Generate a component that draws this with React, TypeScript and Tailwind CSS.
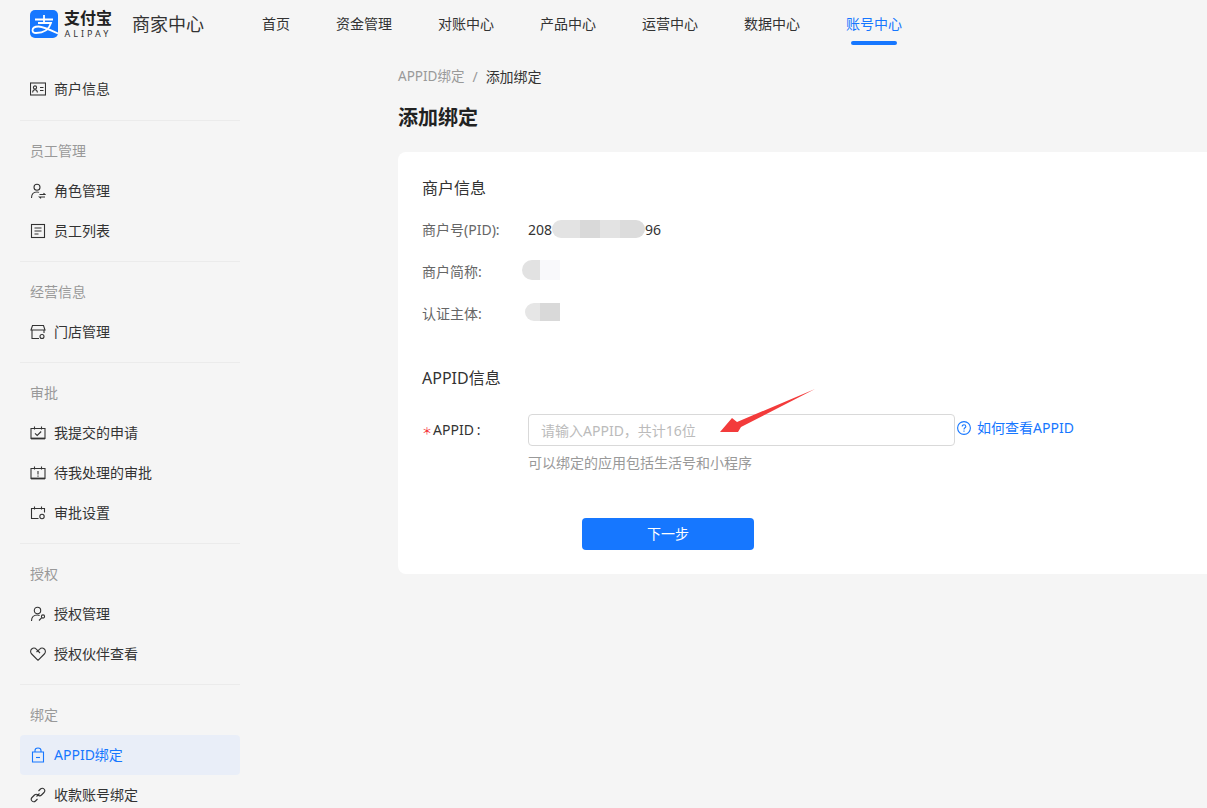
import type { ReactNode } from "react";

const navItems = ["资金管理", "对账中心", "产品中心", "运营中心", "数据中心"];

const Icon = ({ children }: { children: ReactNode }) => (
  <svg width="16" height="16" viewBox="0 0 16 16" fill="none" stroke="currentColor" strokeWidth="1.1" className="shrink-0">
    {children}
  </svg>
);

const icons: Record<string, ReactNode> = {
  card: (
    <>
      <rect x="0.5" y="2" width="15" height="12" />
      <circle cx="5" cy="6.5" r="1.6" />
      <path d="M2.6 11.5c.2-1.8 1.2-2.7 2.4-2.7s2.2.9 2.4 2.7M10 6.5h3.5M10 9.5h3.5" />
    </>
  ),
  role: (
    <>
      <circle cx="7" cy="4.2" r="3" />
      <path d="M1.5 15c0-3.6 2-6 5.500-6 .8 0 1.500.1 2 .4M9.500 11.500h5.500l-1.500-1.300M15 14h-5.500l1.500 1.300" />
    </>
  ),
  list: (
    <>
      <rect x="1.500" y="1.500" width="13" height="13" />
      <path d="M4.500 5h7M4.500 8h7M4.500 11h4" />
    </>
  ),
  store: (
    <>
      <path d="M2.500 1.500h11l1.500 4.500H1l1.500-4.500zM2 6v8.500h7M14 6v3" />
      <circle cx="12" cy="12.500" r="2" />
    </>
  ),
  check: (
    <>
      <path d="M1 3.500h14v10H1zM4.500 1.500v3M11.500 1.500v3" />
      <path d="M1 13.500h14" strokeWidth="1.800" />
      <path d="M5 8.300l2.200 2.200 4-4" />
    </>
  ),
  alert: (
    <>
      <path d="M1 3.500h14v10H1zM4.500 1.500v3M11.500 1.500v3" />
      <path d="M1 13.500h14" strokeWidth="1.800" />
      <path d="M8 6v3.500M8 10.500v1.200" />
    </>
  ),
  setting: (
    <>
      <path d="M8.500 13.500H1.500v-10h13v4M4.500 1.500v3M11.500 1.500v3" />
      <circle cx="12" cy="11.500" r="2.200" />
    </>
  ),
  auth: (
    <>
      <circle cx="7.500" cy="4.500" r="3.200" />
      <path d="M1.500 15c0-3.600 2.400-6 6-6 .8 0 1.500.1 2.100.4" />
      <circle cx="13" cy="10.500" r="1.600" />
      <path d="M11.800 11.700L9 14.500" />
    </>
  ),
  heart: (
    <path d="M8 14.300L1.700 8C.2 6.500.3 4.200 1.700 3c1.500-1.300 3.500-1 4.800.3L10 7M8 14.300l6.300-6.300c1.500-1.500 1.400-3.800 0-5-1.500-1.300-3.500-1-4.800.3L6.500 6" />
  ),
  lock: (
    <>
      <path d="M5 5V3.500C5 2 6.300 1 8 1s3 1 3 2.500V5" />
      <path d="M2.500 5h11v10h-11z" />
      <path d="M6 10.500h4" />
    </>
  ),
  link: (
    <>
      <path d="M6.500 9.500l3-3" />
      <path d="M8.500 4l2-2c1-1 2.600-1 3.500 0s1 2.500 0 3.500l-2.500 2.500c-1 1-2.500 1-3.500 0" />
      <path d="M7.500 12l-2 2c-1 1-2.600 1-3.500 0s-1-2.500 0-3.500l2.500-2.500c1-1 2.500-1 3.500 0" />
    </>
  ),
};

type Item = { label: string; icon: string; active?: boolean };
type Group = { title?: string; items: Item[] };

const groups: Group[] = [
  { items: [{ label: "商户信息", icon: "card" }] },
  {
    title: "员工管理",
    items: [
      { label: "角色管理", icon: "role" },
      { label: "员工列表", icon: "list" },
    ],
  },
  { title: "经营信息", items: [{ label: "门店管理", icon: "store" }] },
  {
    title: "审批",
    items: [
      { label: "我提交的申请", icon: "check" },
      { label: "待我处理的审批", icon: "alert" },
      { label: "审批设置", icon: "setting" },
    ],
  },
  {
    title: "授权",
    items: [
      { label: "授权管理", icon: "auth" },
      { label: "授权伙伴查看", icon: "heart" },
    ],
  },
  {
    title: "绑定",
    items: [
      { label: "APPID绑定", icon: "lock", active: true },
      { label: "收款账号绑定", icon: "link" },
    ],
  },
];

function Logo() {
  return (
    <div className="flex items-center">
      <svg width="28" height="28" viewBox="0 0 28 28" className="shrink-0">
        <rect width="28" height="28" rx="5" fill="#1677ff" />
        <path
          d="M5 9.500h18M14 5v8M8 13h13c-2 6.500-7 10-15 10-2.500 0-3.500-1.300-3.500-2.500C2.500 18 5 16.500 8.500 16.500c4 0 10 2.500 19.500 7"
          fill="none"
          stroke="#fff"
          strokeWidth="1.800"
        />
      </svg>
      <div className="ml-[5px] flex w-[50px] flex-col items-center">
        <span className="text-base leading-[16px] font-bold text-[#222]">支付宝</span>
        <span className="mt-[3px] text-[9px] leading-[9px] tracking-[3px] text-[#333]">ALIPAY</span>
      </div>
    </div>
  );
}

function Header() {
  return (
    <header className="flex h-[48px] items-center pl-[30px]">
      <Logo />
      <span className="ml-[19px] text-lg leading-[24px] text-[#333]">商家中心</span>
      <nav className="ml-[58px] flex items-center gap-[46px] text-sm text-[#333]">
        <a>首页</a>
        {navItems.map((n) => (
          <a key={n}>{n}</a>
        ))}
        <a className="relative text-[#1677ff]">
          账号中心
          <span className="absolute top-[27px] left-[5px] h-1 w-[46px] rounded-full bg-[#1677ff]" />
        </a>
      </nav>
    </header>
  );
}

function Sidebar() {
  return (
    <aside className="ml-5 w-[220px] shrink-0 pt-[21px]">
      {groups.map((g, i) => (
        <div key={i} className={i > 0 ? "border-t border-[#ebebeb] pt-[10px] pb-[10px]" : "pb-[11px]"}>
          {g.title && <div className="flex h-10 items-center pl-[10px] text-sm text-[#999]">{g.title}</div>}
          {g.items.map((it) => (
            <div
              key={it.label}
              className={`flex h-10 items-center gap-2 rounded pl-[10px] text-sm ${
                it.active ? "bg-[#e9eef8] text-[#1677ff]" : "text-[#333]"
              }`}
            >
              <Icon>{icons[it.icon]}</Icon>
              {it.label}
            </div>
          ))}
        </div>
      ))}
    </aside>
  );
}

function InfoRow({ label, children }: { label: string; children: ReactNode }) {
  return (
    <div className="flex h-[42px] items-center text-sm">
      <span className="w-[106px] shrink-0 text-[#666]">{label}</span>
      {children}
    </div>
  );
}

function Main() {
  return (
    <main className="ml-[158px] w-[900px] shrink-0">
      <div className="flex h-[20px] items-center text-sm text-[#999]">
        <span className="text-[13.5px]">APPID绑定</span>
        <span className="mx-2">/</span>
        <span className="text-[#333]">添加绑定</span>
      </div>
      <h1 className="mt-[17px] text-xl leading-[28px] font-bold text-[#222]">添加绑定</h1>
      <section className="relative mt-[20px] h-[422px] rounded-lg bg-white px-6 pt-[24px]">
        <h2 className="text-base leading-[24px] text-[#333]">商户信息</h2>
        <div className="mt-[9px]">
          <InfoRow label="商户号(PID):">
            <span className="text-[#333]">208</span>
            <span className="-mt-[2px] flex h-[18px] w-[93px] overflow-hidden rounded-full">
              <span className="w-[28px] bg-[#e3e3e3]" />
              <span className="w-[20px] bg-[#d9d9d9]" />
              <span className="w-[20px] bg-[#e3e3e3]" />
              <span className="w-[25px] bg-[#dcdcdc]" />
            </span>
            <span className="text-[#333]">96</span>
          </InfoRow>
          <InfoRow label="商户简称:">
            <span className="-mt-[4px] -ml-[6px] flex h-5 w-[38px]">
              <span className="w-[18px] rounded-l-full bg-[#e2e2e2]" />
              <span className="w-5 bg-[#f9f9fb]" />
            </span>
          </InfoRow>
          <InfoRow label="认证主体:">
            <span className="-mt-[4px] -ml-[3px] flex h-[18px] w-[35px]">
              <span className="w-[15px] rounded-l-full bg-[#e6e6e6]" />
              <span className="w-5 bg-[#d9d9d9]" />
            </span>
          </InfoRow>
        </div>
        <h2 className="mt-[31px] text-base leading-[24px] text-[#333]">APPID信息</h2>
        <div className="mt-[24px] flex text-sm">
          <div className="flex h-8 w-[106px] shrink-0 items-center text-[#333]">
            <span className="mt-[2px] w-[11px] text-[10px] leading-none text-[#f5222d]">＊</span>
            APPID
            <span className="ml-[3px]">:</span>
          </div>
          <div>
            <div className="flex items-center">
              <input
                placeholder="请输入APPID，共计16位"
                className="h-8 w-[427px] rounded-sm border border-[#d9d9d9] bg-white px-3 text-sm outline-none placeholder:text-[#bbb]"
              />
              <a className="-mt-[5px] ml-[2px] flex items-center gap-[6px] text-[#1677ff]">
                <svg width="14" height="14" viewBox="0 0 14 14" fill="none" stroke="currentColor" strokeWidth="1.100">
                  <circle cx="7" cy="7" r="6.400" />
                  <path d="M5.200 5.500C5.200 4.500 6 3.800 7 3.800s1.800.7 1.800 1.600c0 1.400-1.800 1.400-1.800 3M7 9.500v1.200" />
                </svg>
                如何查看APPID
              </a>
            </div>
            <p className="mt-[7px] text-sm leading-[20px] text-[#999]">可以绑定的应用包括生活号和小程序</p>
            <button className="mt-[45px] ml-[54px] h-8 w-[172px] rounded-sm bg-[#1677ff] text-sm text-white">下一步</button>
          </div>
        </div>
        {/* annotation arrow drawn over the form */}
        <svg width="100" height="50" viewBox="0 0 100 50" className="absolute top-[236px] left-[320px]">
          <polygon points="2,44 14,30 19,34 97,1 23,39 20,44" fill="#f33b3b" />
        </svg>
      </section>
    </main>
  );
}

export default function App() {
  return (
    <div className="h-[808px] w-[1207px] overflow-hidden bg-[#f5f5f5] font-['Noto_Sans','Noto_Sans_CJK_SC',sans-serif]">
      <Header />
      <div className="flex h-[760px] overflow-hidden">
        <Sidebar />
        <div className="pt-[19px]">
          <Main />
        </div>
      </div>
    </div>
  );
}
